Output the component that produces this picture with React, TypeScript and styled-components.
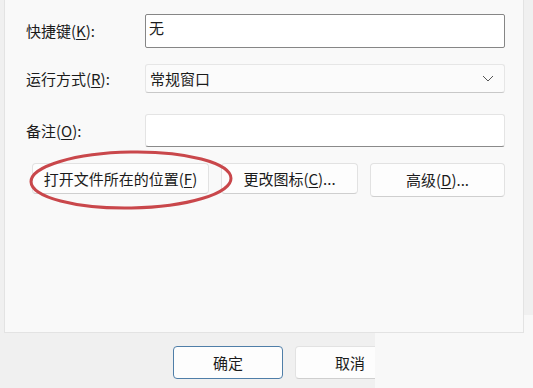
import React from 'react';
import styled, { createGlobalStyle } from 'styled-components';

const GlobalStyle = createGlobalStyle`
    html, body {
        margin: 0;
        padding: 0;
        background: #f0f0f0;
    }
    body {
        font-family: "Noto Sans CJK SC", "Noto Sans", sans-serif;
        color: #1b1b1b;
    }
`

const Screen = styled.div`
    width: 533px;
    height: 388px;
    overflow: hidden;
    display: flex;
    flex-direction: column;
    background: #f0f0f0;
`

const Top = styled.div`
    height: 333px;
    display: flex;
`

const Panel = styled.div`
    position: relative;
    margin-left: 4px;
    width: 520px;
    box-sizing: border-box;
    background: #f9f9f9;
    border: 1px solid #e3e3e3;
    border-top: none;
    padding: 14px 0 0 21px;
    display: flex;
    flex-direction: column;
`

const Gutter = styled.div`
    flex: 1;
    background: linear-gradient(#f0f0f0 0, #f0f0f0 315px, #f8f8f8 315px);
`

type RowProps = {
    gap: number;
}

const Row = styled.div<RowProps>`
    display: flex;
    align-items: center;
    margin-top: ${(props) => props.gap}px;
`

const Label = styled.div`
    width: 119px;
    font-size: 15px;
    line-height: 20px;
    white-space: nowrap;

    u{
        text-decoration-thickness: 1px;
        text-underline-offset: 2px;
    }
`

const TextBox = styled.div`
    width: 360px;
    height: 34px;
    box-sizing: border-box;
    background: #fff;
    border: 1px solid #868686;
    border-radius: 2px;
    padding: 3px 3px 0;
    font-size: 15px;
    line-height: 20px;
`

const MemoBox = styled.div`
    width: 360px;
    height: 33px;
    box-sizing: border-box;
    background: #fff;
    border: 1px solid #e4e4e4;
    border-bottom: 1px solid #8a8a8a;
    border-radius: 3px;
`

const Select = styled.div`
    width: 360px;
    height: 29px;
    box-sizing: border-box;
    background: #fbfbfb;
    border: 1px solid #e6e6e6;
    border-bottom-color: #c8c8c8;
    border-radius: 3px;
    padding: 0 10px 0 4px;
    display: flex;
    align-items: center;
    justify-content: space-between;
    font-size: 15px;
    line-height: 20px;

    svg{
        display: block;
    }
`

const ButtonRow = styled.div`
    display: flex;
    margin: 16px 0 0 6px;
`

type BtnProps = {
    w: number;
    h?: number;
    ml?: number;
}

const Btn = styled.div<BtnProps>`
    width: ${(props) => props.w}px;
    height: ${(props) => props.h ?? 31}px;
    margin-left: ${(props) => props.ml ?? 0}px;
    flex-shrink: 0;
    box-sizing: border-box;
    background: #fdfdfd;
    border: 1px solid #e2e2e2;
    border-bottom-color: #cfcfcf;
    border-radius: 4px;
    display: flex;
    align-items: center;
    justify-content: center;
    font-size: 15px;
    line-height: 20px;
    white-space: nowrap;

    u{
        text-decoration-thickness: 1px;
        text-underline-offset: 2px;
    }
`

const DefaultBtn = styled(Btn)`
    border: 1px solid #4f7ea8;
    border-radius: 4px;
`

const Circle = styled.svg`
    position: absolute;
    left: 16px;
    top: 147px;
    pointer-events: none;
`

const Footer = styled.div`
    flex: 1;
    display: flex;
`

const FooterButtons = styled.div`
    width: 375px;
    overflow: hidden;
    display: flex;
    padding: 13px 0 0 173px;
    box-sizing: border-box;
    background: #f0f0f0;
`

const FooterBlank = styled.div`
    flex: 1;
    background: #f8f8f8;
`

export default function App() {
    return (
        <Screen>
            <GlobalStyle />
            <Top>
                <Panel>
                    <Row gap={0}>
                        <Label>快捷键(<u>K</u>):</Label>
                        <TextBox>无</TextBox>
                    </Row>
                    <Row gap={16}>
                        <Label>运行方式(<u>R</u>):</Label>
                        <Select>
                            <span>常规窗口</span>
                            <svg width="12" height="7" viewBox="0 0 12 7">
                                <path d="M1 1 L6 6 L11 1" fill="none" stroke="#555" strokeWidth="1" />
                            </svg>
                        </Select>
                    </Row>
                    <Row gap={21}>
                        <Label>备注(<u>O</u>):</Label>
                        <MemoBox />
                    </Row>
                    <ButtonRow>
                        <Btn w={177}>打开文件所在的位置(<u>F</u>)</Btn>
                        <Btn w={137} ml={12}>更改图标(<u>C</u>)...</Btn>
                        <Btn w={135} h={34} ml={12}>高级(<u>D</u>)...</Btn>
                    </ButtonRow>
                    <Circle width="220" height="68" viewBox="0 0 220 68">
                        <ellipse cx="110" cy="33" rx="100" ry="28" fill="none" stroke="#c9474b" strokeWidth="3" transform="rotate(-1 110 33)" />
                    </Circle>
                </Panel>
                <Gutter />
            </Top>
            <Footer>
                <FooterButtons>
                    <DefaultBtn w={110} h={33}>确定</DefaultBtn>
                    <Btn w={110} h={33} ml={12}>取消</Btn>
                </FooterButtons>
                <FooterBlank />
            </Footer>
        </Screen>
    );
}
